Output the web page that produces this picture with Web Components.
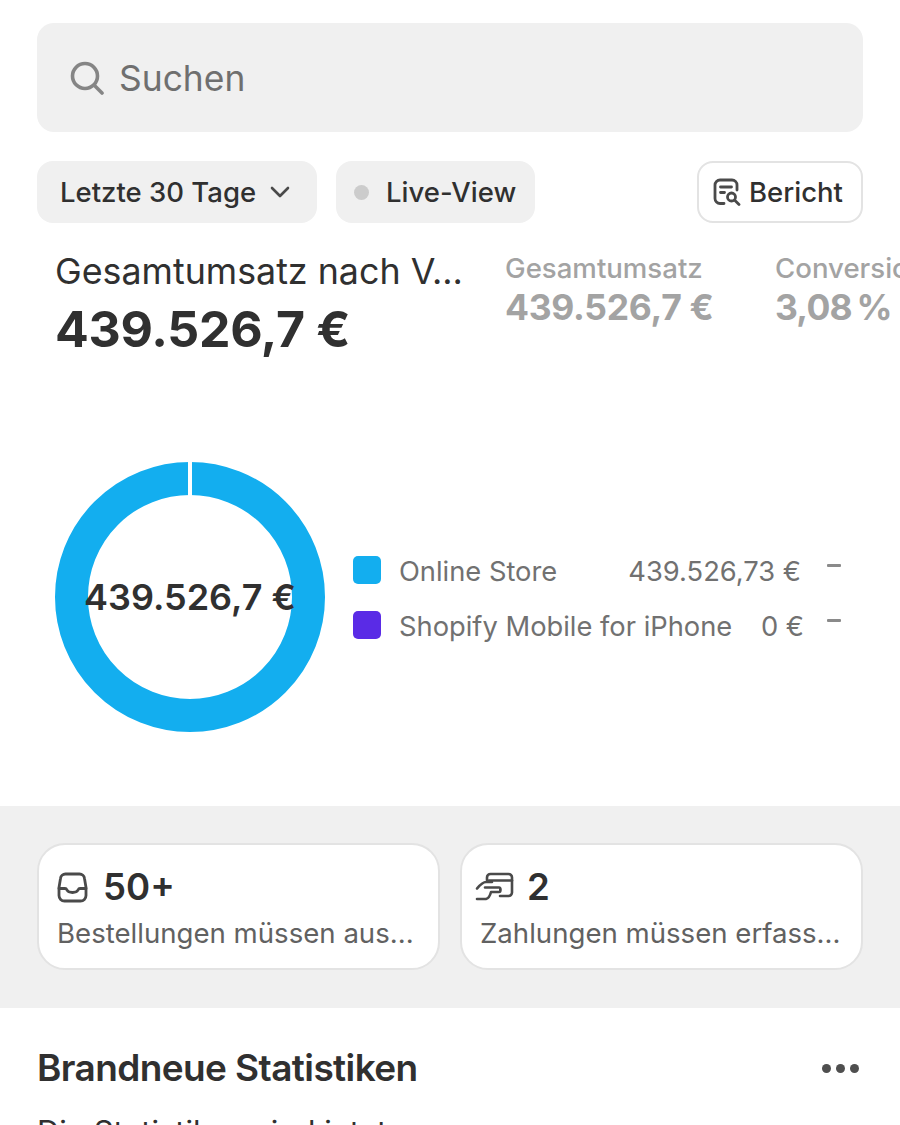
<!DOCTYPE html>
<html lang="de">
<head>
<meta charset="utf-8">
<title>Statistiken</title>
<style>
  html, body {
    margin: 0;
    background: #fff;
    font-family: Inter, "Liberation Sans", sans-serif;
    color: #303030;
  }
  body {
    width: 900px;
    height: 1125px;
    overflow: hidden;
  }
</style>
</head>
<body>
<stats-search></stats-search>
<stats-filters></stats-filters>
<stats-metrics></stats-metrics>
<stats-donut></stats-donut>
<stats-tasks></stats-tasks>
<stats-news></stats-news>

<script>
class StatsSearch extends HTMLElement {
  connectedCallback () {
    this.attachShadow({ mode: 'open' }).innerHTML = `
    <style>
      :host { display: block; padding: 23px 37px 0; }
      .box {
        height: 109px;
        background: #f0f0f0;
        border-radius: 17px;
        display: flex;
        align-items: center;
        gap: 15px;
        padding: 0 33px;
        box-sizing: border-box;
      }
      svg { width: 34px; height: 34px; flex: none; }
      span { font-size: 35.4px; color: #6f6f6f; position: relative; top: 1px; }
    </style>
    <div class="box">
      <svg viewBox="0 0 34 34" fill="none" stroke="#858585" stroke-width="3.6" stroke-linecap="round">
        <circle cx="15" cy="15" r="12.5"/>
        <path d="M24.5 24.5 32 32"/>
      </svg>
      <span>Suchen</span>
    </div>`;
  }
}

class StatsFilters extends HTMLElement {
  connectedCallback () {
    this.attachShadow({ mode: 'open' }).innerHTML = `
    <style>
      :host {
        display: flex;
        padding: 29px 37px 0;
        gap: 19px;
      }
      .chip {
        height: 62px;
        box-sizing: border-box;
        border-radius: 16px;
        background: #f0f0f0;
        display: flex;
        align-items: center;
        font-size: 27.5px;
        font-weight: 450;
        color: #303030;
        white-space: nowrap;
      }
      .range { width: 280px; padding-left: 23px; gap: 14px; }
      .live { width: 199px; padding-left: 18px; gap: 17px; }
      .dot { width: 15px; height: 15px; border-radius: 50%; background: #cccccc; }
      .report {
        width: 166px;
        margin-left: auto;
        background: #fff;
        border: 2px solid #e3e3e3;
        padding-left: 14px;
        gap: 8px;
      }
      svg { flex: none; }
    </style>
    <div class="chip range">
      Letzte 30 Tage
      <svg width="20" height="12" viewBox="0 0 20 12" fill="none" stroke="#4a4a4a" stroke-width="2.6" stroke-linecap="round" stroke-linejoin="round"><path d="M2 2l8 8 8-8"/></svg>
    </div>
    <div class="chip live"><span class="dot"></span>Live-View</div>
    <div class="chip report">
      <svg width="28" height="28" viewBox="0 0 28 28" fill="none" stroke="#4a4a4a" stroke-width="2.8" stroke-linecap="round">
        <path d="M11 25.500H7a5 5 0 0 1-5-5V7a5 5 0 0 1 5-5h12a5 5 0 0 1 5 5v5"/>
        <path d="M7.500 9h11M7.500 14.500h4"/>
        <circle cx="18.500" cy="19" r="4"/>
        <path d="M22 22.500l4 4"/>
      </svg>
      Bericht
    </div>`;
  }
}

class StatsMetric extends HTMLElement {
  connectedCallback () {
    const active = this.hasAttribute('active');
    this.attachShadow({ mode: 'open' }).innerHTML = `
    <style>
      :host {
        display: block;
        flex: none;
        width: ${this.getAttribute('width')}px;
        white-space: nowrap;
        padding-top: 2px;
      }
      .label {
        font-size: ${active ? 35.8 : 27.6}px;
        line-height: ${active ? 40 : 34}px;
        color: ${active ? '#303030' : '#a3a3a3'};
        font-weight: ${active ? 400 : 500};
      }
      .value {
        font-size: ${active ? 50 : 35.5}px;
        line-height: ${active ? 60 : 46}px;
        font-weight: 700;
        color: ${active ? '#303030' : '#a3a3a3'};
        letter-spacing: -0.3px;
        margin-top: ${active ? 8 : 0}px;
      }
    </style>
    <div class="label"><slot name="label"></slot></div>
    <div class="value"><slot name="value"></slot></div>`;
  }
}

class StatsMetrics extends HTMLElement {
  connectedCallback () {
    this.attachShadow({ mode: 'open' }).innerHTML = `
    <style>
      :host {
        display: flex;
        padding: 0 0 0 55px;
        margin-top: 26px;
        height: 112px;
        overflow: hidden;
      }
      .gap1 { width: 41px; flex: none; }
      .gap2 { width: 40px; flex: none; }
      .tight { word-spacing: -3px; letter-spacing: -0.8px; }
    </style>
    <stats-metric active width="409">
      <span slot="label">Gesamtumsatz nach V...</span>
      <span slot="value">439.526,7 €</span>
    </stats-metric>
    <div class="gap1"></div>
    <stats-metric width="230">
      <span slot="label">Gesamtumsatz</span>
      <span slot="value">439.526,7 €</span>
    </stats-metric>
    <div class="gap2"></div>
    <stats-metric width="160">
      <span slot="label">Conversion</span>
      <span slot="value" class="tight">3,08 %</span>
    </stats-metric>`;
  }
}

class StatsDonut extends HTMLElement {
  connectedCallback () {
    this.attachShadow({ mode: 'open' }).innerHTML = `
    <style>
      :host {
        display: flex;
        align-items: center;
        padding: 101px 0 0 55px;
        gap: 28px;
      }
      .ring { position: relative; width: 270px; height: 270px; flex: none; }
      svg { display: block; }
      .sum {
        position: absolute;
        inset: 0;
        display: flex;
        align-items: center;
        justify-content: center;
        font-size: 36px;
        font-weight: 600;
        color: #303030;
        white-space: nowrap;
      }
      .legend { display: flex; flex-direction: column; width: 488px; gap: 27px; }
      .row { display: flex; align-items: center; height: 28px; }
      .swatch { width: 28px; height: 28px; border-radius: 5px; flex: none; }
      .name, .val { font-size: 27.3px; line-height: 28px; color: #717171; white-space: nowrap; position: relative; top: 2px; }
      .name { margin-left: 18px; flex: 1; }
      .dash { width: 14px; height: 2.5px; background: #8a8a8a; border-radius: 1px; margin-bottom: 8px; flex: none; }
    </style>
    <div class="ring">
      <svg width="270" height="270" viewBox="0 0 270 270">
        <circle cx="135" cy="135" r="118.5" fill="none" stroke="#13aeef" stroke-width="33"/>
        <rect x="133" y="0" width="4" height="36" fill="#fff"/>
      </svg>
      <div class="sum">439.526,7 €</div>
    </div>
    <div class="legend">
      <div class="row">
        <span class="swatch" style="background:#13aeef"></span>
        <span class="name">Online Store</span>
        <span class="val">439.526,73 €</span>
        <span class="dash" style="margin-left:26px"></span>
      </div>
      <div class="row">
        <span class="swatch" style="background:#5a2be6"></span>
        <span class="name">Shopify Mobile for iPhone</span>
        <span class="val">0 €</span>
        <span class="dash" style="margin-left:23px"></span>
      </div>
    </div>`;
  }
}

class StatsTask extends HTMLElement {
  connectedCallback () {
    this.attachShadow({ mode: 'open' }).innerHTML = `
    <style>
      :host {
        display: block;
        box-sizing: border-box;
        height: 127px;
        min-width: 0;
        background: #fff;
        border: 2px solid #e3e3e3;
        border-radius: 28px;
        padding: 19px 18px 0;
      }
      .top { display: flex; align-items: center; gap: 15px; height: 46px; }
      .count { font-size: 36.6px; font-weight: 600; color: #303030; }
      .text {
        margin-top: 5px;
        font-size: 27.6px;
        line-height: 36px;
        color: #616161;
        white-space: nowrap;
      }
      ::slotted(svg) { flex: none; }
    </style>
    <div class="top"><slot name="icon"></slot><span class="count">${this.getAttribute('count')}</span></div>
    <div class="text"><slot></slot></div>`;
  }
}

class StatsTasks extends HTMLElement {
  connectedCallback () {
    this.attachShadow({ mode: 'open' }).innerHTML = `
    <style>
      :host {
        display: grid;
        grid-template-columns: 403px 403px;
        gap: 20px;
        margin-top: 74px;
        height: 202px;
        box-sizing: border-box;
        padding: 37px 37px 0 37px;
        background: #f0f0f0;
      }
    </style>
    <stats-task count="50+">
      <svg slot="icon" width="31" height="31" viewBox="0 0 31 31" fill="none" stroke="#4a4a4a" stroke-width="2.800" stroke-linecap="round" stroke-linejoin="round">
        <path d="M8.500 2h14a5 5 0 0 1 5 4.500l1.500 9v8a5.500 5.500 0 0 1-5.500 5.500h-16A5.500 5.500 0 0 1 2 23.500v-8l1.500-9a5 5 0 0 1 5-4.500z"/>
        <path d="M2 16.500h6c1 0 1.600 .6 2 1.500 .7 1.500 2 2.500 5.500 2.500s4.800-1 5.500-2.500c.4-.9 1-1.500 2-1.500h6"/>
      </svg>
      Bestellungen müssen aus...
    </stats-task>
    <stats-task count="2">
      <svg slot="icon" width="40" height="30" viewBox="0 0 40 30" fill="none" stroke="#4a4a4a" stroke-width="2.600" stroke-linecap="round" stroke-linejoin="round" style="margin-left:-5px;margin-right:-3px">
        <path d="M12 8V5.500C12 3.500 13.500 2 15.500 2h18a3.500 3.500 0 0 1 3.500 3.500v15a3.500 3.500 0 0 1-3.500 3.500H25"/>
        <path d="M14 8.500h23"/>
        <path d="M2 16.500C5 13 7.500 10 11 10h6"/>
        <path d="M10 15.500h14c2 0 2 4.500 0 4.500h-8c-1 4-3 6.500-5 7H2"/>
      </svg>
      Zahlungen müssen erfass...
    </stats-task>`;
  }
}

class StatsNews extends HTMLElement {
  connectedCallback () {
    this.attachShadow({ mode: 'open' }).innerHTML = `
    <style>
      :host { display: block; padding: 38px 37px 0; }
      .head { display: flex; align-items: center; justify-content: space-between; height: 44px; }
      h2 {
        margin: 0;
        font-size: 37px;
        line-height: 44px;
        font-weight: 600;
        letter-spacing: -0.6px;
        color: #303030;
      }
      .more { display: flex; gap: 5px; margin-right: 4px; }
      .more i { width: 9px; height: 9px; border-radius: 50%; background: #4f4f4f; }
      p { margin: 22px 0 0; font-size: 31px; line-height: 40px; color: #303030; white-space: nowrap; }
    </style>
    <div class="head">
      <h2>Brandneue Statistiken</h2>
      <div class="more"><i></i><i></i><i></i></div>
    </div>
    <p>Die Statistiken sind jetzt</p>`;
  }
}

customElements.define('stats-search', StatsSearch);
customElements.define('stats-filters', StatsFilters);
customElements.define('stats-metric', StatsMetric);
customElements.define('stats-metrics', StatsMetrics);
customElements.define('stats-donut', StatsDonut);
customElements.define('stats-task', StatsTask);
customElements.define('stats-tasks', StatsTasks);
customElements.define('stats-news', StatsNews);
</script>
</body>
</html>
